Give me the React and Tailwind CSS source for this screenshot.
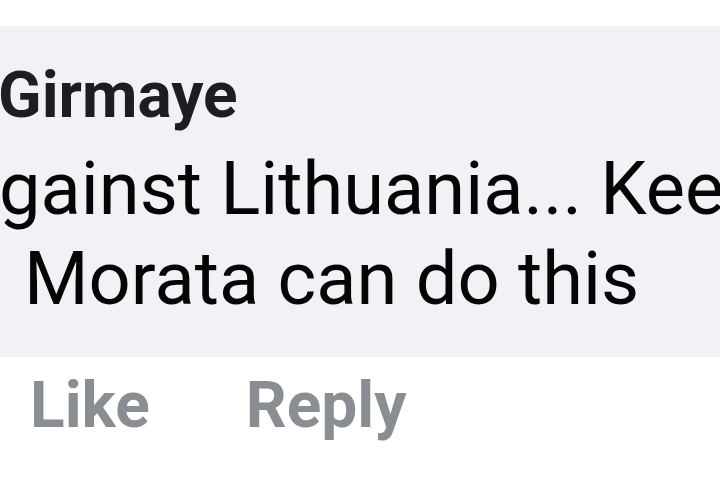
export default function App() {
  return (
    <div className="w-[720px] h-[480px] bg-white overflow-hidden" style={{ fontFamily: "Roboto, 'Noto Sans', sans-serif" }}>
      <div className="h-[26px]" />
      <div className="bg-[#f0f2f5] pt-[34px] pb-[33px] overflow-hidden">
        <div className="ml-[-2px] text-[64px] leading-[72px] font-bold text-[#1c1e21] whitespace-nowrap">Girmaye</div>
        <div className="mt-[12px] text-[74px] leading-[90px] text-[#050505] whitespace-nowrap">
          <div className="ml-[-1px]">gainst Lithuania... Keep</div>
          <div className="ml-[24px]">Morata can do this</div>
        </div>
      </div>
      <div className="mt-[13px] flex text-[64px] leading-[72px] font-bold text-[#8a8d91] whitespace-nowrap">
        <span className="ml-[30px]">Like</span>
        <span className="ml-[96px]">Reply</span>
      </div>
    </div>
  );
}
